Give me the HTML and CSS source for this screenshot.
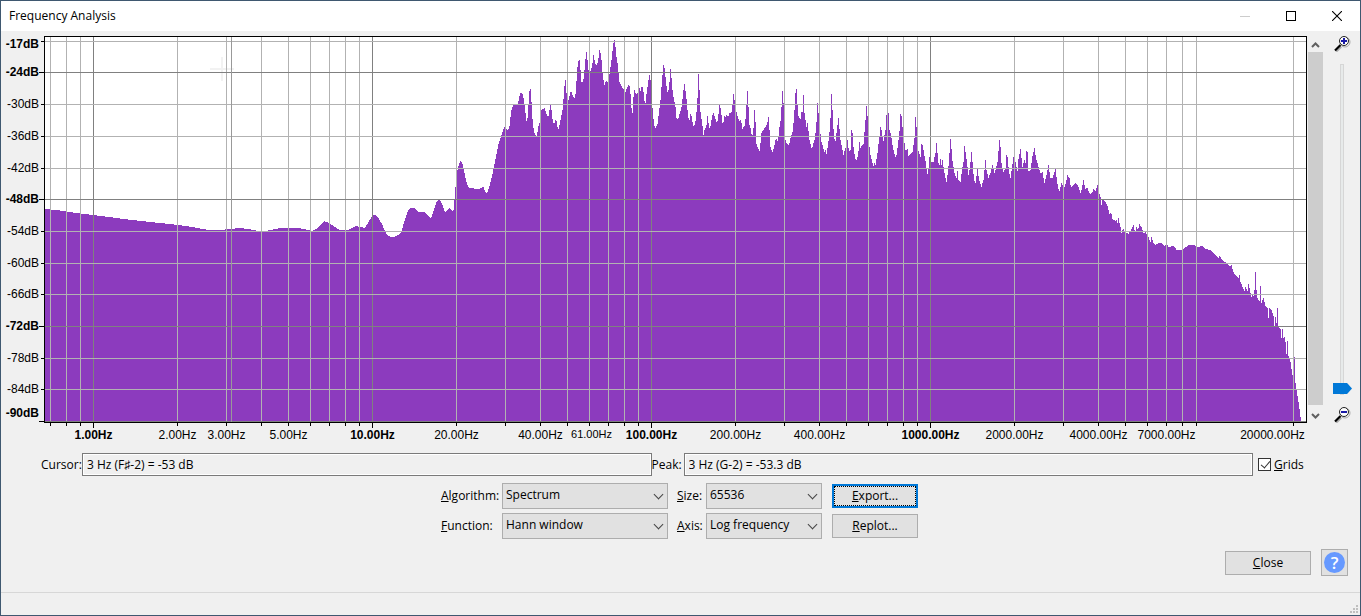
FILE: index.html
```html
<!DOCTYPE html>
<html lang="en">
<head>
    <meta charset="UTF-8">
    <meta name="viewport" content="width=device-width, initial-scale=1.0">
    <title>Frequency Analysis</title>
    <link rel="stylesheet" href="styles.css">
</head>
<body>
    <div class="window">
        <header class="titlebar">
            <h1>Frequency Analysis</h1>
            <div class="caption-buttons">
                <button type="button" aria-label="Minimize" disabled>
                    <svg width="10" height="10"><path d="M0 5.5h10" stroke="#ccc"/></svg>
                </button>
                <button type="button" aria-label="Maximize">
                    <svg width="10" height="10"><rect x="0.5" y="0.5" width="9" height="9" fill="none" stroke="#000"/></svg>
                </button>
                <button type="button" aria-label="Close window">
                    <svg width="10" height="10"><path d="M0 0l10 10M10 0L0 10" stroke="#000" stroke-width="1.1"/></svg>
                </button>
            </div>
        </header>

        <main>
            <section class="chart">
                <div class="y-axis" id="y-axis"></div>
                <svg class="plot" id="plot" viewBox="45 37 1261 385" preserveAspectRatio="none" shape-rendering="crispEdges">
                    <polygon fill="#8c3bbe" points="45,422 45,209 60,210.5 80,213.5 93,215 109,217 124,219 141,221 160,223 178,225 192,227 206,229.5 225,229.5 240,228 251,229.5 258,231 266,231 275,229 285,227.5 298,227.5 303,229 308,230 312,231 316,229 320,225 324,221 329,223 335,227 340,230 348,230 352,228 356,226 360,227 365,228 368,223 371,218 373,215 376,215 379,219 382,224 384,229 386,233 388,236 391,237 394,237 398,235 401,232 402,230 405,219 408,211 410,208 414,208 417,211 419,212 422,212 425,212 427,215 430,218 432,216 434,210 436,203 438,200 440,200 442,204 445,212 448,210 449,208 452,211 454,209 455,192 457,172
                        460,161 462,162 464,171 467,184 469,188 478,189 481,188 483,186 485,191 487,194 489,188 492,176 495,162 497,152 499,142 502,134 504,127 507,130 509,129 510,123 511,112 513,106 513,105 518,105 519,98 521,92 523,95 525,108 526,118 527,124 528,112 529,96 530,86 531,92 532,112 533,126 535,135 537,136 538,128 540,121 541,110 545,108 546,113 548,117 549,115 550,105 551,105 552,115 553,123 555,123 556,118 557,123 558,130 559,128 561,118 563,107 564,92 565,80 566,79 566.5,93 568,103 569,98 571,90 572,94 574,98 575,98 576,90 577,73 578,62 579.5,60 580.5,70 581,80 582,83 584,78 585,63 586.5,52 587.5,60 588.5,70 590,72 592,67 593.5,55 595,62 596,66 598,62 599.5,50 600.5,53 602,63 602.5,73 603.5,80 604.5,85 606,81 608,82 609,78 610.5,67 612,57 613,45 614.3,39 615.5,47 616.5,57 618,66 619,77
                        619.5,82 622,87 624,90 625,94 627,88 628.5,85 630,87 631,100 632,115 633,111 633.5,97 634.5,90 636,94 638,93 639,87 640.5,91 642,85 643.5,92 644.5,101 645.5,103 646.5,94 648,83 649.5,75 651,83 652,103 653,113 654,125 655.5,128 657.5,124 659,112 660.5,100 661.5,87 662.5,75 663.5,65 665,70 666,83 667.5,92 669,89 670,75 670.5,69 671.5,78 672.5,90 674,100 675.5,107 676.5,118 678,120 679,116 680,113 682,105 683,93 684.5,84 686,94 687.5,110 688.5,118 690,121 690.5,114 692,117 693,126 695,125 696,118 697,107 698,90 698.5,74 699.5,90 700.5,112 702,122 703.5,135 705,127 706,129 707.5,116 709,127 710,129 711.5,120 713,112 715,117 717,124 718,118 719.5,105 721,110 722,120 723,125 724.5,116 726,117 727,114 728,117 729.5,113 731.5,112 733,102 733.5,94 734.5,100
                        736,108 737,115 739.5,121 741,120 742.5,129 745,125 746,113 747,97 747.5,91 748.5,107 749.5,125 751,129 752,138 753,133 754,124 754.5,110 755.5,122 756.5,144 758,148 759.5,151 760.5,143 761.5,133 764,129 766,126 767.5,122 768.5,117 769.5,130 770.5,147 772.5,152 774,147 776,138 777.5,141 779,133 780,122 781,120 781.5,107 782.5,91 783.5,103 784.5,127 785.5,140 787,144 789,146 790,140 791.5,135 793,130 794.5,110 795.5,93 796.5,89 797.5,105 798.5,116 800.5,119 801.5,112 802.5,112 803.5,95 804.5,113 805.5,120 806.5,127 807.5,123 808.5,131 809.5,140 811.5,148 812.5,147 814.5,140 815.5,133 816.5,122 817.5,103 818.5,113 820,130 821.5,142 823,147 824.5,152 825.5,150 826.5,154 828,145 829.5,132 830.5,118 831.5,94 832.5,110 833.5,129 834.5,139 835.5,141 836.5,133 838.5,118 839.5,129
                        840.5,140 842,147 843.5,155 845,149 846.5,147 847.5,140 849,152 850.5,150 851.5,130 852.5,133 853.5,147 855,158 856.5,160 858,155 859.5,142 860.5,148 862.5,145 863.5,144 864.5,132 865.5,120 866.5,106 867.5,116 869,143 870.5,155 872.5,163 873.5,166 874.5,163 875.5,165 877.5,153 879,140 880.5,127 881.5,130 882.5,137 883.5,141 885.5,130 886.5,115 887.5,123 888.5,113 889.5,130 891,135 892.5,145 893.5,150 895.5,157 896.5,155 898,145 899.5,131 900.5,114 901.5,116 902.5,127 904,140 905.5,150 907.5,149 908.5,156 911,153 912.5,152 914.5,138 915.5,117 916.5,127 918,150 920.5,157 921.5,144 922.5,145 924,153 925.5,161 927.5,174 928.5,168 929.5,157 931,162 933.5,162 935.5,153 936.5,143 937.5,153 939,168 940.5,159 941.5,165 942.5,160 944.5,173 946.5,182 948,172 949.5,153 950.5,139 951.5,149 952.5,161
                        954.5,173 956.5,178 957.5,171 958.5,180 960.5,182 962,170 963.5,162 964.5,146 965.5,152 966.5,159 968.5,175 970,167 971.5,152 972.5,162 974,180 975.5,183 977.5,169 979,180 981.5,187 983.5,180 985.5,160 986.5,170 988.5,178 990.5,173 992.5,165 994.5,173 996,168 997.5,162 999.5,140 1000.5,147 1001.5,163 1003.5,172 1005.5,168 1006.5,155 1007.5,157 1009,172 1010.5,178 1012,167 1013.5,157 1015.5,162 1017.5,171 1018.5,159 1020.5,149 1021.5,158 1022.5,167 1024.5,160 1025.5,163 1026.5,151 1027.5,152 1028.5,171 1030.5,170 1032.5,156 1034.5,148 1036,158 1038.5,167 1040.5,173 1042.5,172 1044.5,183 1046.5,175 1048.5,165 1050.5,178 1052.5,178 1055.5,169 1056.5,177 1058,188
                        1059.5,191 1061.5,183 1064,188 1066,183 1067.5,175 1069.5,178 1071,188 1073,185 1076,183 1078.5,187 1080.5,193 1082,188 1083.5,180 1085.5,189 1087,187 1090,194 1092,193 1093.5,189 1095.5,191 1097.5,185 1099,192 1100.5,197 1101.5,205 1102.5,200 1105,201 1107.5,206 1109.5,214 1111,212 1112.5,219 1115.5,221 1116,219 1117.5,223 1118.5,218 1120.5,227 1121.5,233 1123,228 1124.5,232 1128.5,234 1130.5,231 1133.5,225 1135,233 1136.5,227 1138,230 1139.5,224 1142,228 1144,234 1145.5,232 1148,236 1150.5,242 1151.5,237 1153,242 1155.5,245 1159,243 1161,243 1164,246 1167,244 1168.5,247 1174,246 1176.5,250 1180.5,250 1184.5,248 1189,245 1193.5,245 1197.5,247 1202.5,246 1205,249 1210.5,250 1215,255 1218.5,258 1219.5,256 1222.5,260 1226.5,263 1230,267 1231.5,265 1234,274 1238.5,278 1239.5,275 1240.5,282
                        1244.5,291 1245.5,287 1247.5,291 1248.5,284 1251.5,297 1252.5,295 1253.5,296 1254.5,290 1255.5,272 1256.5,290 1257.5,298 1259.5,301 1260.5,286 1261.5,303 1263.5,298 1265.5,306 1267.5,308 1268.5,318 1269.5,308 1271.5,310 1273.5,316 1274.5,326 1275.5,317 1276.5,323 1277.5,308 1278.5,326 1280.5,329 1281.5,338 1282.5,329 1283.5,338 1284.5,337 1285.5,342 1286.5,354 1287.5,341 1288.5,356 1290.5,362 1292.5,375 1293.5,377 1294.5,357 1295.5,383 1296.5,390 1298.5,402 1300,412 1301,422"/>
                    <path d="M222 57v24M210 69h24" stroke="#f2f2f2" stroke-width="2"/>
                    <g id="grid"></g>
                </svg>
                <div class="x-axis" id="x-axis"></div>
                <div class="scrollbar">
                    <svg width="9" height="6"><path d="M1 5l3.5-3.5L8 5" fill="none" stroke="#606060" stroke-width="2"/></svg>
                    <div class="scroll-thumb"></div>
                    <svg width="9" height="6"><path d="M1 1l3.5 3.5L8 1" fill="none" stroke="#606060" stroke-width="2"/></svg>
                </div>
                <div class="zoom">
                    <svg width="17" height="16" viewBox="0 0 17 16">
                        <path d="M2 15.5l5-5" stroke="#aaa" stroke-width="2.5"/>
                        <path d="M1 14.5l5.500-5.500" stroke="#000" stroke-width="2.2"/>
                        <circle cx="11" cy="6" r="5" fill="none" stroke="#aaa"/>
                        <circle cx="10" cy="5" r="4.5" fill="#fff" stroke="#222"/>
                        <path d="M10 2v6M7 5h6" stroke="#1a1aa6" stroke-width="2"/>
                    </svg>
                    <input type="range" class="zoom-slider" aria-label="Vertical zoom" min="0" max="100" value="0">
                    <svg width="17" height="16" viewBox="0 0 17 16">
                        <path d="M2 15.5l5-5" stroke="#aaa" stroke-width="2.5"/>
                        <path d="M1 14.5l5.500-5.500" stroke="#000" stroke-width="2.2"/>
                        <circle cx="11" cy="6" r="5" fill="none" stroke="#aaa"/>
                        <circle cx="10" cy="5" r="4.5" fill="#fff" stroke="#222"/>
                        <path d="M7 5h6" stroke="#1a1aa6" stroke-width="2"/>
                    </svg>
                </div>
            </section>

            <section class="readouts">
                <label for="cursor">Cursor:</label>
                <input type="text" id="cursor" value="3 Hz (F♯-2) = -53 dB" readonly>
                <label for="peak">Peak:</label>
                <input type="text" id="peak" value="3 Hz (G-2) = -53.3 dB" readonly>
                <div class="check">
                    <input type="checkbox" id="grids" checked>
                    <label for="grids"><u>G</u>rids</label>
                </div>
            </section>

            <section class="controls">
                <label for="algorithm"><u>A</u>lgorithm:</label>
                <div class="select">
                    <select id="algorithm"><option>Spectrum</option></select>
                </div>
                <label for="size" class="second"><u>S</u>ize:</label>
                <div class="select">
                    <select id="size"><option>65536</option></select>
                </div>
                <button type="button" class="btn default"><u>E</u>xport...</button>

                <label for="function"><u>F</u>unction:</label>
                <div class="select">
                    <select id="function"><option>Hann window</option></select>
                </div>
                <label for="axis" class="second"><u>A</u>xis:</label>
                <div class="select">
                    <select id="axis"><option>Log frequency</option></select>
                </div>
                <button type="button" class="btn"><u>R</u>eplot...</button>
            </section>

            <section class="actions">
                <button type="button" class="btn"><u>C</u>lose</button>
                <button type="button" class="btn help" aria-label="Help"><span>?</span></button>
            </section>
        </main>

        <footer class="statusbar">
            <svg width="8" height="8" fill="#bfbfbf">
                <path d="M6 0h2v2h-2zM3 3h2v2h-2zM6 3h2v2h-2zM0 6h2v2h-2zM3 6h2v2h-2zM6 6h2v2h-2z"/>
            </svg>
        </footer>
    </div>

    <script src="script.js"></script>
</body>
</html>
```

FILE: styles.css
```css
* {
    box-sizing: border-box;
}

body {
    margin: 0;
    font-family: "Segoe UI", "Open Sans", sans-serif;
    font-size: 12px;
    line-height: 16px;
    color: #000;
    background: #f0f0f0;
}

.window {
    display: flex;
    flex-direction: column;
    min-height: 100vh;
    border: 1px solid #3f5870;
}

.titlebar {
    display: flex;
    justify-content: space-between;
    height: 30px;
    background: #fff;
}

.titlebar h1 {
    margin: 0;
    padding-left: 8px;
    font-size: 12px;
    font-weight: normal;
    line-height: 30px;
}

.caption-buttons {
    display: flex;
}

.caption-buttons button {
    display: flex;
    align-items: center;
    justify-content: center;
    width: 46px;
    padding: 0;
    border: none;
    background: none;
}

main {
    flex: 1;
    display: flex;
    flex-direction: column;
    padding-top: 5px;
}

/* chart */
.chart {
    flex: 1;
    display: grid;
    grid-template-columns: 43px 1fr 16px 37px;
    grid-template-rows: minmax(200px, 1fr) 30px;
}

.y-axis,
.x-axis {
    position: relative;
    font-family: Arial, "Liberation Sans", sans-serif;
    white-space: nowrap;
}

.x-axis {
    grid-column: 2;
    grid-row: 2;
    margin: 0 1px;
}

.plot {
    display: block;
    width: 100%;
    height: 100%;
    min-height: 0;
    border: 1px solid #000;
    background: #fff;
}

.y-axis span {
    position: absolute;
    right: 5px;
    transform: translateY(-50%);
}

.x-axis span {
    position: absolute;
    top: 4px;
    transform: translateX(-50%);
}

.y-axis .major,
.x-axis .major {
    font-weight: bold;
}

.x-axis .small {
    top: 3px;
    font-size: 11px;
}

.y-axis i,
.x-axis i {
    position: absolute;
    background: #000;
}

.y-axis i {
    right: 0;
    width: 3px;
    height: 1px;
}

.y-axis i.major {
    width: 5px;
}

.x-axis i {
    top: 0;
    width: 1px;
    height: 3px;
}

.x-axis i.major {
    height: 5px;
}

.scrollbar {
    display: flex;
    flex-direction: column;
    align-items: center;
    gap: 4px;
    grid-column: 3;
    grid-row: 1;
    margin-left: 1px;
    padding: 6px 0 4px;
}

.scroll-thumb {
    flex: 1;
    align-self: stretch;
    margin-bottom: 4px;
    background: #cdcdcd;
}

.zoom {
    display: flex;
    flex-direction: column;
    align-items: center;
    gap: 12px;
    grid-column: 4;
    grid-row: 1;
    padding-left: 1px;
}

.zoom svg {
    flex: none;
}

.zoom-slider {
    -webkit-appearance: none;
    appearance: none;
    writing-mode: vertical-lr;
    direction: rtl;
    flex: 1;
    width: 20px;
    min-height: 0;
    margin: 0;
    background: none;
}

.zoom-slider::-webkit-slider-runnable-track {
    width: 4px;
    background: #e7eaea;
    border: 1px solid #d6d6d6;
}

.zoom-slider::-webkit-slider-thumb {
    -webkit-appearance: none;
    width: 19px;
    height: 11px;
    margin-left: -8px;
    background: #0078d7;
    clip-path: polygon(0 0, 74% 0, 100% 50%, 74% 100%, 0 100%);
}

/* cursor and peak */
.readouts {
    display: grid;
    grid-template-columns: 41px 1fr 32px 1fr 107px;
    align-items: center;
    padding-left: 40px;
}

.readouts input[type="text"] {
    width: 100%;
    height: 23px;
    padding: 0 4px;
    border: 1px solid #7a7a7a;
    box-shadow: inset 0 0 0 1px #fff;
    background: #f0f0f0;
    font: inherit;
}

.check {
    display: flex;
    align-items: center;
    gap: 3px;
    padding-left: 5px;
}

.check input {
    -webkit-appearance: none;
    appearance: none;
    display: flex;
    width: 13px;
    height: 13px;
    margin: 0;
    border: 1px solid #333;
    background: #fff;
}

.check input:checked::after {
    content: "";
    width: 4px;
    height: 8px;
    margin-left: 4px;
    border: solid #333;
    border-width: 0 1px 1px 0;
    transform: rotate(40deg);
}

/* options */
.controls {
    display: grid;
    grid-template-columns: 61px 166px 38px 116px 98px;
    row-gap: 4px;
    align-items: center;
    justify-content: center;
    margin-top: 7px;
}

.controls .second {
    padding-left: 9px;
}

.controls .btn {
    margin-left: 10px;
}

.select {
    position: relative;
}

.select::after {
    content: "";
    position: absolute;
    top: 8px;
    right: 6px;
    width: 6px;
    height: 6px;
    border: solid #444;
    border-width: 0 1px 1px 0;
    transform: rotate(45deg);
    pointer-events: none;
}

.select select {
    -webkit-appearance: none;
    appearance: none;
    display: block;
    width: 100%;
    height: 26px;
    padding: 0 3px 2px;
    border: 1px solid #adadad;
    border-radius: 0;
    background: #e1e1e1;
    color: #000;
    font: inherit;
}

.btn {
    width: 86px;
    height: 24px;
    padding: 0;
    border: 1px solid #adadad;
    background: #e1e1e1;
    color: #000;
    font: inherit;
}

.btn.default {
    border: 2px solid #0078d7;
    outline: 1px dotted #000;
    outline-offset: -3px;
}

.actions {
    display: flex;
    align-items: center;
    justify-content: flex-end;
    gap: 10px;
    margin-top: 10px;
    padding: 0 12px 16px 0;
}

.btn.help {
    display: flex;
    align-items: center;
    justify-content: center;
    width: 27px;
    height: 27px;
}

.help span {
    width: 21px;
    height: 21px;
    border-radius: 50%;
    background: #6699ff;
    color: #fff;
    font-size: 17px;
    font-weight: 600;
    line-height: 21px;
}

.statusbar {
    display: flex;
    align-items: flex-end;
    justify-content: flex-end;
    height: 23px;
    padding: 2px;
    border-top: 1px solid #d7d7d7;
}
```

FILE: script.js
```js
const SVG_NS = 'http://www.w3.org/2000/svg';
const PLOT = { left: 45, top: 37, width: 1261, height: 385 };

const grid = document.getElementById('grid');
const xAxis = document.getElementById('x-axis');
const yAxis = document.getElementById('y-axis');

// 279 units per decade, 1 Hz at 93
function freqToX(freq) {
    return Math.round(93 + 279 * Math.log10(freq));
}

function dbToY(db) {
    return Math.round(40.8 + (-18 - db) * 5.281);
}

function addLine(d, color) {
    const path = document.createElementNS(SVG_NS, 'path');
    path.setAttribute('d', d);
    path.setAttribute('stroke', color);
    grid.appendChild(path);
}

function addMark(axis, tag, side, percent, className, text) {
    const el = document.createElement(tag);
    el.style[side] = percent + '%';
    el.className = className;
    if (text) el.textContent = text;
    axis.appendChild(el);
}

// vertical lines and frequency ticks
const freqs = [0.7, 0.8, 0.9];
for (let decade = 1; decade <= 1000; decade *= 10) {
    for (let i = 1; i < 10; i++) freqs.push(i * decade);
}
freqs.push(20000);

freqs.forEach(function(freq) {
    const x = freqToX(freq);
    const major = [1, 10, 100, 1000].includes(freq);
    addLine('M' + (x + 0.5) + ' 37v385', major ? '#808080' : '#b2b2b2');
    addMark(xAxis, 'i', 'left', (x - PLOT.left) / PLOT.width * 100, major ? 'major' : '');
});

[1, 2, 3, 5, 10, 20, 40, 61, 100, 200, 400, 1000, 2000, 4000, 7000, 20000].forEach(function(freq) {
    const major = [1, 10, 100, 1000].includes(freq);
    let x = freqToX(freq) + 0.5;
    if (freq === 20000) x -= 21; // keep the last label inside the plot
    addMark(xAxis, 'span', 'left', (x - PLOT.left) / PLOT.width * 100,
        major ? 'major' : freq === 61 ? 'small' : '', freq.toFixed(2) + 'Hz');
});

// horizontal lines and level ticks
for (let db = -18; db >= -90; db -= 6) {
    const y = dbToY(db);
    const major = [-24, -48, -72, -90].includes(db);
    addLine('M45 ' + (y + 0.5) + 'h1261', major ? '#808080' : '#b2b2b2');
    addMark(yAxis, 'i', 'top', (y - PLOT.top + 1) / 387 * 100, major ? 'major' : '');

    let labelY = y;
    if (db === -18) labelY += 3;
    if (db === -90) labelY -= 8;
    const bold = major || db === -18;
    addMark(yAxis, 'span', 'top', (labelY - PLOT.top + 1) / 387 * 100,
        bold ? 'major' : '', (db === -18 ? -17 : db) + 'dB');
}

// cursor line
addLine('M231.5 37v385', '#999');
```
